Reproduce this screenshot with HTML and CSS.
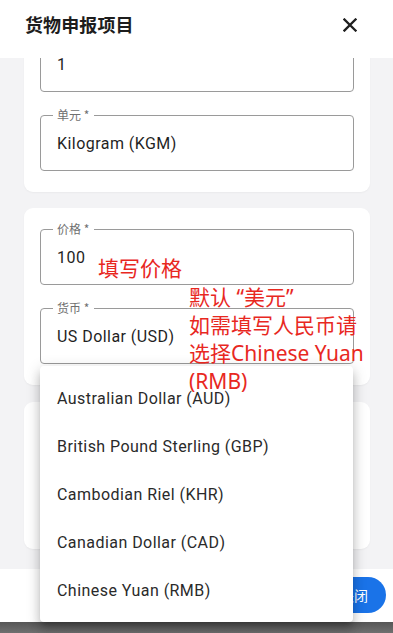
FILE: index.html
```html
<!DOCTYPE html>
<html lang="zh-CN">
<head>
<meta charset="utf-8">
<meta name="viewport" content="width=device-width, initial-scale=1">
<title>货物申报项目</title>
<link rel="stylesheet" href="styles.css">
</head>
<body>
<div class="page">
  <header class="topbar">
    <h1 class="title">货物申报项目</h1>
    <button class="close" aria-label="关闭">
      <svg viewBox="0 0 14 14" width="14" height="14"><path d="M1.5 1.5 L12.5 12.5 M12.5 1.5 L1.5 12.5" stroke="#1f1f1f" stroke-width="2.3" stroke-linecap="square" fill="none"/></svg>
    </button>
  </header>

  <main class="scroll">
    <section class="card card-first">
      <fieldset class="field"><legend class="legend-hidden"></legend><div class="value">1</div></fieldset>
      <fieldset class="field"><legend>单元 *</legend><div class="value">Kilogram (KGM)</div></fieldset>
    </section>
    <section class="card">
      <fieldset class="field"><legend>价格 *</legend><div class="value">100</div></fieldset>
      <fieldset class="field"><legend>货币 *</legend><div class="value">US Dollar (USD)</div></fieldset>
    </section>
    <section class="card card-third"></section>
  </main>

  <footer class="footer">
    <button class="btn-close">关闭</button>
  </footer>
  <div class="navstrip"></div>

  <ul class="menu">
    <li>Australian Dollar (AUD)</li>
    <li>British Pound Sterling (GBP)</li>
    <li>Cambodian Riel (KHR)</li>
    <li>Canadian Dollar (CAD)</li>
    <li>Chinese Yuan (RMB)</li>
  </ul>

  <div class="note note-price">填写价格</div>
  <div class="note note-currency">默认 “美元”<br>如需填写人民币请<br>选择Chinese Yuan<br>(RMB)</div>
</div>
</body>
</html>
```

FILE: styles.css
```css
* { box-sizing: border-box; }
html, body { margin: 0; padding: 0; }
body {
  font-family: Roboto, "Noto Sans CJK SC", sans-serif;
  background: #f3f3f5;
}
.page {
  position: relative;
  width: 393px;
  height: 633px;
  overflow: hidden;
  display: flex;
  flex-direction: column;
  background: #f3f3f5;
}
.topbar {
  height: 58px;
  flex: 0 0 58px;
  background: #ffffff;
  display: flex;
  align-items: center;
  justify-content: space-between;
  padding: 0 36px 0 25px;
  position: relative;
  z-index: 2;
}
.title {
  margin: 0;
  font-family: "Noto Sans CJK SC", sans-serif;
  font-size: 18px;
  line-height: 24px;
  font-weight: 700;
  color: #1d1d1d;
  letter-spacing: 0.1px;
  margin-top: -10px;
}
.close {
  border: 0;
  background: none;
  padding: 0;
  width: 14px;
  height: 14px;
  display: flex;
  margin-top: -9px;
}
.scroll {
  flex: 1 1 auto;
  overflow: hidden;
  padding: 0 23px 0 24px;
  display: flex;
  flex-direction: column;
  gap: 16px;
}
.card {
  background: #ffffff;
  border-radius: 9px;
  padding: 15px 16px 21px 16px;
  display: flex;
  flex-direction: column;
  gap: 17px;
  box-shadow: 0 1px 2px rgba(0,0,0,0.04);
  flex: 0 0 auto;
}
.card-first { margin-top: -43px; }
.card-third { height: 147px; margin-top: 1px; }
.field {
  margin: 0;
  border: 1px solid #9a9a9a;
  border-radius: 4px;
  padding: 11px 16px 14px 16px;
  min-width: 0;
}
.field legend {
  font-size: 12px;
  line-height: 12px;
  height: 12px;
  color: #6f6f6f;
  padding: 0 5px 0 4px;
  margin-left: -4px;
  font-family: "Noto Sans CJK SC", sans-serif;
}
.field .legend-hidden { width: 42px; }
.value {
  font-size: 16px;
  line-height: 24px;
  color: #1f1f1f;
  letter-spacing: 0.45px;
}
.footer {
  flex: 0 0 53px;
  background: #ffffff;
  display: flex;
  align-items: center;
  justify-content: flex-end;
  padding-right: 7px;
}
.btn-close {
  border: 0;
  background: #1a73e8;
  color: #ffffff;
  height: 36px;
  padding: 0 18px;
  border-radius: 18px;
  font-family: "Noto Sans CJK SC", sans-serif;
  font-size: 14px;
  margin-top: -1px;
}
.navstrip {
  flex: 0 0 11px;
  background: linear-gradient(#555555, #707070);
}
.menu {
  position: absolute;
  left: 40px;
  top: 366px;
  width: 313px;
  margin: 0;
  padding: 9px 0 7px 0;
  list-style: none;
  background: #ffffff;
  border-radius: 4px;
  box-shadow: 0 5px 5px -3px rgba(0,0,0,0.2), 0 8px 10px 1px rgba(0,0,0,0.14), 0 3px 14px 2px rgba(0,0,0,0.12);
  z-index: 3;
}
.menu li {
  height: 48px;
  line-height: 48px;
  padding-left: 17px;
  font-size: 16px;
  color: #2a2a2a;
  letter-spacing: 0.45px;
}
.note {
  position: absolute;
  color: #e8281f;
  font-family: "Noto Sans", "Noto Sans CJK SC", sans-serif;
  font-size: 21px;
  line-height: 28px;
  z-index: 4;
  white-space: nowrap;
}
.note-price { left: 98px; top: 254px; }
.note-currency { left: 189px; top: 283px; }
```
